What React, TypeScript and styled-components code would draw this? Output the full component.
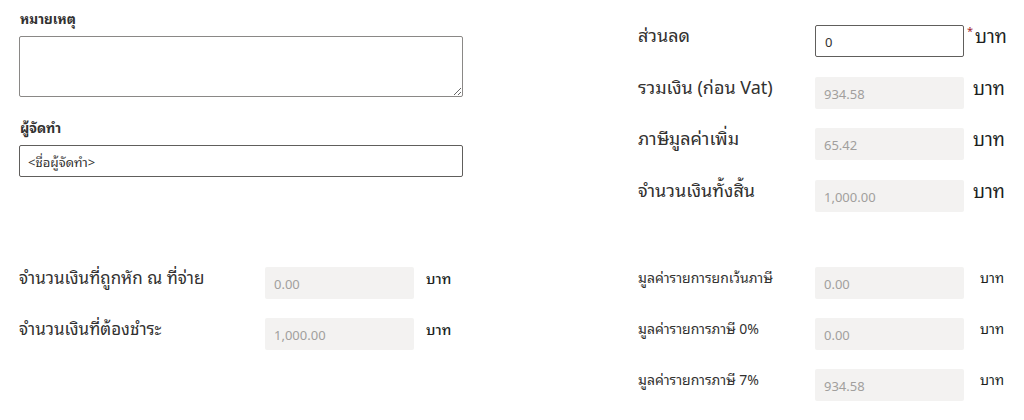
import React from "react";
import styled, { createGlobalStyle } from "styled-components";

const Global = createGlobalStyle`
  html, body { margin: 0; padding: 0; background: #ffffff; }
  body {
    font-family: "Noto Sans", "Noto Sans Thai Looped", "Loma", sans-serif;
    color: #323130;
  }
  * { box-sizing: border-box; }
`;

const Page = styled.div`
  width: 1024px;
  height: 420px;
  padding: 10px 0 0 19px;
  display: grid;
  grid-template-columns: 444px 1fr;
  column-gap: 175px;
  grid-template-rows: 213px auto;
  overflow: hidden;
`;

const Column = styled.div<{ $top?: number }>`
  display: flex;
  flex-direction: column;
  padding-top: ${(p) => p.$top ?? 0}px;
`;

const FieldLabel = styled.label<{ $gap?: number }>`
  display: block;
  font-size: 13.5px;
  font-weight: 700;
  line-height: 18px;
  color: #323130;
  margin: ${(p) => p.$gap ?? 0}px 0 8px 1px;
`;

const TextArea = styled.textarea`
  width: 444px;
  height: 61px;
  border: 1px solid #8a8886;
  border-radius: 2px;
  resize: vertical;
  font: inherit;
  font-size: 13px;
  padding: 6px 8px;
  margin: 0;
`;

const TextInput = styled.input`
  width: 444px;
  height: 32px;
  border: 1px solid #605e5c;
  border-radius: 2px;
  font: inherit;
  font-size: 13px;
  color: #323130;
  padding: 0 8px;
  margin: 0;
`;

const Rows = styled.div<{ $gap: number }>`
  display: grid;
  grid-auto-rows: 32px;
  row-gap: ${(p) => p.$gap}px;
`;

const Row = styled.div<{ $labelW: number }>`
  display: grid;
  grid-template-columns: ${(p) => p.$labelW}px 149px auto;
  align-items: start;
`;

const RowLabel = styled.div<{ $size: number; $lift?: number }>`
  font-size: ${(p) => p.$size}px;
  line-height: 22px;
  margin-top: ${(p) => -(p.$lift ?? 0)}px;
  color: #323130;
  white-space: nowrap;
`;

const Field = styled.div<{ $editable?: boolean }>`
  height: 32px;
  border-radius: 2px;
  display: flex;
  align-items: center;
  padding: 2px 9px 0;
  font-size: 13px;
  background: ${(p) => (p.$editable ? "#ffffff" : "#f3f2f1")};
  border: ${(p) => (p.$editable ? "1px solid #605e5c" : "none")};
  color: ${(p) => (p.$editable ? "#323130" : "#a19f9d")};
`;

const Unit = styled.div<{ $size: number; $offset: number; $weight?: number }>`
  display: flex;
  align-items: flex-start;
  font-size: ${(p) => p.$size}px;
  font-weight: ${(p) => p.$weight ?? 400};
  line-height: 22px;
  padding-left: ${(p) => p.$offset}px;
  color: #201f1e;
  white-space: nowrap;
`;

const Star = styled.span`
  color: #a4262c;
  font-size: 11px;
  line-height: 12px;
  margin: 0 2px 0 -6px;
`;

type Item = { label: string; value: string; editable?: boolean; required?: boolean };

const topRight: Item[] = [
  { label: "ส่วนลด", value: "0", editable: true, required: true },
  { label: "รวมเงิน (ก่อน Vat)", value: "934.58" },
  { label: "ภาษีมูลค่าเพิ่ม", value: "65.42" },
  { label: "จำนวนเงินทั้งสิ้น", value: "1,000.00" },
];

const bottomLeft: Item[] = [
  { label: "จำนวนเงินที่ถูกหัก ณ ที่จ่าย", value: "0.00" },
  { label: "จำนวนเงินที่ต้องชำระ", value: "1,000.00" },
];

const bottomRight: Item[] = [
  { label: "มูลค่ารายการยกเว้นภาษี", value: "0.00" },
  { label: "มูลค่ารายการภาษี 0%", value: "0.00" },
  { label: "มูลค่ารายการภาษี 7%", value: "934.58" },
];

export default function App() {
  return (
    <>
      <Global />
      <Page>
        <Column>
          <FieldLabel>หมายเหตุ</FieldLabel>
          <TextArea />
          <FieldLabel $gap={22}>ผู้จัดทำ</FieldLabel>
          <TextInput defaultValue="<ชื่อผู้จัดทำ>" />
        </Column>
        <Column $top={15}>
          <Rows $gap={19.67}>
            {topRight.map((it) => (
              <Row key={it.label} $labelW={177}>
                <RowLabel $size={18} $lift={1}>{it.label}</RowLabel>
                <Field $editable={it.editable}>{it.value}</Field>
                <Unit $size={18.5} $offset={9}>
                  {it.required && <Star>*</Star>}
                  บาท
                </Unit>
              </Row>
            ))}
          </Rows>
        </Column>
        <Column $top={44}>
          <Rows $gap={19}>
            {bottomLeft.map((it) => (
              <Row key={it.label} $labelW={246}>
                <RowLabel $size={17}>{it.label}</RowLabel>
                <Field>{it.value}</Field>
                <Unit $size={14.5} $offset={12} $weight={500}>บาท</Unit>
              </Row>
            ))}
          </Rows>
        </Column>
        <Column $top={44}>
          <Rows $gap={19}>
            {bottomRight.map((it) => (
              <Row key={it.label} $labelW={177}>
                <RowLabel $size={14}>{it.label}</RowLabel>
                <Field>{it.value}</Field>
                <Unit $size={14} $offset={16}>บาท</Unit>
              </Row>
            ))}
          </Rows>
        </Column>
      </Page>
    </>
  );
}
